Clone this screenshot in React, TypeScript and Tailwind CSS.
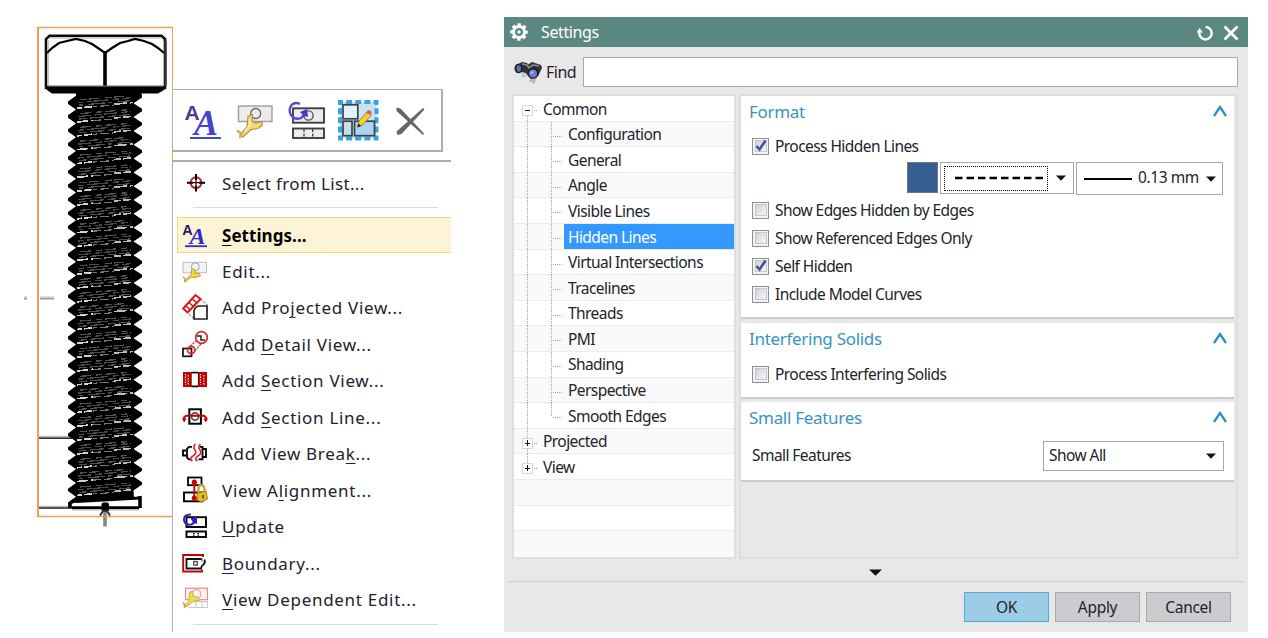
import type { ReactNode } from "react";

const PITCH = 13.83;

function Bolt() {
  const left: string[] = [];
  for (let k = 0; k < 30; k++) {
    const y = 102.7 + k * PITCH;
    left.push(`76,${(y - 7).toFixed(1)} 68,${(y - 1.2).toFixed(1)} 68,${(y + 1.2).toFixed(1)}`);
  }
  const right: string[] = [];
  for (let k = 28; k >= 0; k--) {
    const y = 96.2 + k * PITCH;
    right.push(`133.5,${(y + 7).toFixed(1)} 142,${(y + 1.2).toFixed(1)} 142,${(y - 1.2).toFixed(1)}`);
  }
  const threads = Array.from({ length: 29 }, (_, k) => 102.7 + k * PITCH);
  return (
    <svg width="172" height="638" viewBox="0 0 172 638" className="block shrink-0">
      <path d="M172 27.5H38V516.5H172" fill="none" stroke="#f4a04e" strokeWidth="1.4" />
      <path d="M38 27V517" stroke="#f4a04e" strokeWidth="2" />
      <path d="M39 437.2H72M39 507.2H72" stroke="#bbb" strokeWidth="3" />
      <path d="M39 438.3H72M39 508H72" stroke="#333" strokeWidth="1.4" />
      <path d="M40 298.5H54M24 298.5H27" stroke="#999" strokeWidth="2" />
      <path d="M40 296.7H54M24 296.7H27" stroke="#ddd" strokeWidth="1.4" />
      <path d="M46 88V39L49.500 35.800H161.500L165 39V88Z" fill="#fff" stroke="#0a0a0a" strokeWidth="2.600" />
      <path d="M48.3 40V86M50 38H162" stroke="#c4c4c4" strokeWidth="1.3" fill="none" />
      <path d="M165.500 41V86" stroke="#333" strokeWidth="2.400" />
      <path d="M47 53L52 48L59 43L67 41L76 39L85 41L92 44L98 48L105 53L112 48L120 43L128 41L135 39L144 41L152 44L158 48L164 53" fill="none" stroke="#000" strokeWidth="2.2" />
      <path d="M105 52V88" stroke="#000" strokeWidth="3.6" />
      <path d="M46 86H165L164 90L158 93.500H52L47 90Z" fill="#000" />
      <path d="M48 86.200H163" stroke="#666" strokeWidth="1.2" />
      <polygon points={`76,92 ${left.join(" ")} 75,500 75,503 134,499 ${right.join(" ")} 141,93`} fill="#000" />
      <g shapeRendering="crispEdges">
        {threads.map((y, k) => (
          <g key={k} fill="none">
            <path d={`M77 ${y + 5.500}L93 ${y + 3.800}`} stroke="#d2d2d2" strokeWidth="1.700" strokeDasharray={k % 2 ? "11 3" : "5 2 8 2"} />
            <path d={`M93 ${y + 4}L114 ${y + 2.500}`} stroke="#777" strokeWidth="1.200" strokeDasharray={k % 2 ? "8 3" : "4 3 9 3"} />
            <path d={`M114 ${y + 1.500}L133 ${y - 0.200}`} stroke="#bdbdbd" strokeWidth="1.700" strokeDasharray={k % 3 ? "7 2 8 2" : "13 3"} />
            <path d={`M79 ${y + 2.500}L130 ${y - 2}`} stroke="#505050" strokeWidth="1.300" strokeDasharray={k % 3 ? "8 3 14 4" : "4 5 17 3"} />
            <path d={`M78 ${y}L131 ${y - 5}`} stroke="#484848" strokeWidth="1.300" strokeDasharray={k % 2 ? "13 4 7 2" : "6 3 21 5"} />
            <path d={`M80 ${y - 3}L130 ${y - 7}`} stroke="#505050" strokeWidth="1.300" strokeDasharray={k % 3 ? "11 5 6 3" : "7 2 10 6"} />
          </g>
        ))}
      </g>
      <path d="M71 502L139 497V507H71Z" fill="#fff" />
      <path d="M71 502L80 499.500M140 496V508M70 503V508" stroke="#000" strokeWidth="3.600" />
      <path d="M76 501.500L140 498" stroke="#000" strokeWidth="3" />
      <path d="M72 507.600H139" stroke="#000" strokeWidth="2.600" />
      <path d="M72 509.800H139" stroke="#bbb" strokeWidth="1.500" />
      <path d="M105 510V526.500" stroke="#888" strokeWidth="3.600" />
      <rect x="101.500" y="502.500" width="7.500" height="9" rx="2" fill="#000" />
      <path d="M100 515.500L103 511H107L110 515.500" stroke="#333" strokeWidth="2" fill="none" />
      <path d="M38 516.500H172" stroke="#f4a04e" strokeWidth="1.200" />
    </svg>
  );
}

function Icon({ children }: { children: ReactNode }) {
  return (
    <svg width="26" height="26" viewBox="0 0 26 26" fill="none" className="block shrink-0 overflow-visible">
      {children}
    </svg>
  );
}

function BigIcon({ children }: { children: ReactNode }) {
  return (
    <svg width="42" height="42" viewBox="0 0 42 42" fill="none" className="block shrink-0 overflow-visible">
      {children}
    </svg>
  );
}

const icons: Record<string, ReactNode> = {
  target: (
    <>
      <circle cx="14" cy="12.700" r="5.400" stroke="#d01818" strokeWidth="1.900" />
      <path d="M14 4V10M14 15.500V21.500M5 12.700H11M17 12.700H23" stroke="#000" strokeWidth="2" />
      <path d="M14 10V15.500M11 12.700H17" stroke="#300" strokeWidth="1.200" />
    </>
  ),
  settings: (
    <>
      <text x="0.200" y="12.500" fontFamily="Liberation Sans" fontWeight="bold" fontSize="14.500" fill="#2e1a6b">A</text>
      <text x="7.500" y="21.600" fontFamily="Liberation Serif" fontWeight="bold" fontStyle="italic" fontSize="24" fill="#2b2bd0">A</text>
      <path d="M3 24.200H25" stroke="#2b2bd0" strokeWidth="1.800" />
    </>
  ),
  edit: (
    <>
      <rect x="1" y="4.300" width="23.500" height="10.500" fill="#f2f2f2" stroke="#bdbdbd" />
      <circle cx="13.300" cy="8.800" r="4" stroke="#a5a5a5" />
      <path d="M2.500 23L9 16.500L10 10.500L13 12V15.500L17 15L18.500 18L13 19.500L9 19L4 23.500Z" fill="#f2dc3c" stroke="#c59a3a" strokeWidth="1" />
      <path d="M1 19L3 21V24.500" stroke="#c9a04c" strokeWidth="1.600" />
    </>
  ),
  projected: (
    <>
      <path d="M1.200 14.500L13.500 1L18.500 5L5.500 18.500Z" stroke="#cf1a1a" strokeWidth="2" />
      <path d="M7 8.500L11.500 12.500M10.500 5L14.500 8.500M3.800 12L8 15.500" stroke="#cf1a1a" strokeWidth="1.500" />
      <path d="M19 5.500L25.500 11M5 18L12 25" stroke="#dd6666" strokeWidth="1.300" strokeDasharray="2 1.500" />
      <path d="M12 25V17C12.500 13.500 14.500 12 18 12H25V25Z" stroke="#222" strokeWidth="1.700" fill="#fff" />
    </>
  ),
  detail: (
    <>
      <rect x="1" y="17.500" width="8.500" height="7.800" stroke="#111" strokeWidth="1.700" fill="#fff" />
      <circle cx="19.500" cy="6.500" r="5.800" stroke="#d42a2a" strokeWidth="1.700" />
      <circle cx="9.200" cy="19" r="3.600" stroke="#d42a2a" strokeWidth="1.700" />
      <path d="M8 15.500L14.500 9.500M12.500 20L19.500 12.500" stroke="#d42a2a" strokeWidth="1.200" strokeDasharray="2.500 1" />
      <path d="M15 5H19V9H23" stroke="#222" strokeWidth="1.500" />
    </>
  ),
  section: (
    <>
      <path d="M1 5H25V20H1Z" fill="#c90000" />
      <path d="M9.500 6.300H16V18.700H9.500Z" fill="#fff" />
      <path d="M9.500 5.500H16M9.500 19.500H16" stroke="#000" strokeWidth="1.300" />
      <path d="M3.500 7V18M18.500 7V18" stroke="#fff" strokeWidth="1.200" strokeDasharray="1.300 1.300" />
      <path d="M6.200 8.300V18M21.800 8.300V18" stroke="#fff" strokeWidth="1.200" strokeDasharray="1.300 1.300" />
      <path d="M9 6V19M16.400 6V19" stroke="#5a0000" strokeWidth="0.800" />
    </>
  ),
  sectionLine: (
    <>
      <rect x="7.300" y="5.300" width="11.600" height="14.400" stroke="#000" strokeWidth="2" />
      <circle cx="13" cy="12.500" r="3.600" stroke="#555" strokeWidth="1.700" />
      <path d="M2 17V13.500L4 11.700H22L24 13.500V17" stroke="#c90000" strokeWidth="1.900" />
      <path d="M0 14.500H4.500L2.200 18.500ZM21.500 14.500H26L23.800 18.500Z" fill="#c90000" />
    </>
  ),
  viewBreak: (
    <>
      <path d="M4 10.500H1V15.500H4M10 6.800H7L5 8.800V17.500L7 19.300H9.500M18 6.800H20.500V19.300H16.500M21 9H24V17H21" stroke="#000" strokeWidth="1.800" />
      <path d="M13.500 4Q10.500 7 13 10T11 16T10.500 21M18.500 4Q15.500 7 18 10T16 16T15.500 21" stroke="#dc2626" strokeWidth="1.600" />
    </>
  ),
  alignment: (
    <>
      <rect x="6" y="0.500" width="13.500" height="7.700" stroke="#000" strokeWidth="1.800" />
      <rect x="2" y="15.500" width="18.500" height="8.800" stroke="#000" strokeWidth="1.900" />
      <path d="M12.300 6V21" stroke="#d40000" strokeWidth="1.900" />
      <circle cx="12.300" cy="5.200" r="2.600" fill="#d40000" />
      <circle cx="12.300" cy="21" r="2.600" fill="#d40000" />
      <path d="M16.500 16V11.500Q16.500 8 19 8Q22 8 22.500 12V15" stroke="#bfa820" strokeWidth="2.200" />
      <path d="M15 16.500L24 14L25.500 22L19 25L15.500 23Z" fill="#e8bd20" stroke="#9a7b12" strokeWidth="0.900" />
      <path d="M21 18V21.500" stroke="#6b4d00" strokeWidth="1.800" />
    </>
  ),
  update: (
    <>
      <rect x="4.500" y="4.200" width="19.500" height="9.800" stroke="#000" strokeWidth="1.900" />
      <rect x="4.500" y="18.500" width="19.500" height="5.500" stroke="#000" strokeWidth="1.900" />
      <path d="M11 20.500H12.500M15.500 20.500H17M11 22.200H12.500M15.500 22.200H17" stroke="#111" strokeWidth="1.200" />
      <path d="M9 1.500Q1.500 1.500 2 7Q3 12.500 9 11.500Q13 10.500 12.500 6.500" stroke="#2d20c8" strokeWidth="2" />
      <path d="M8.500 5.500L15 3.500V11L11 9.500Z" fill="#2d20c8" />
    </>
  ),
  boundary: (
    <>
      <path d="M21 7V5H1.200V21.500H20V19.500" stroke="#c90000" strokeWidth="1.900" />
      <path d="M20 9H4.500V18.500H19Q19.500 15.500 21.500 14.500Q23.500 13 22.500 9.500" stroke="#111" strokeWidth="1.800" />
      <path d="M20 8V12" stroke="#777" strokeWidth="1.200" />
      <rect x="11.700" y="11.500" width="3.600" height="3.600" stroke="#555" strokeWidth="1.400" />
    </>
  ),
  dependent: (
    <>
      <rect x="3.500" y="2.200" width="22" height="11.500" fill="#fff5f5" stroke="#ef8a8a" strokeWidth="1.200" />
      <circle cx="14.500" cy="8" r="4.300" stroke="#f0a5a5" strokeWidth="1.300" />
      <path d="M7 15.500H25.500V21.500H7M14 15.500V21.500M20 15.500V21.500" stroke="#c9c9c9" strokeWidth="1.100" />
      <path d="M2.500 20L7 14.500L7.500 6L11 5.500V10L15.500 11L18 14L11 15.500L5 20.500Z" fill="#efdb52" stroke="#d1a34b" strokeWidth="0.900" />
      <path d="M1 16.500L2.500 18.500V22" stroke="#c99e4f" strokeWidth="1.600" />
    </>
  ),
};

function MenuRow({ icon, children }: { icon: string; children: ReactNode }) {
  return (
    <div className="flex h-[36.5px] shrink-0 items-center pl-[9px]">
      <Icon>{icons[icon]}</Icon>
      <span className="ml-[14px] pt-px whitespace-nowrap">{children}</span>
    </div>
  );
}

function U({ children }: { children: ReactNode }) {
  return <span className="underline decoration-1 underline-offset-[3px]">{children}</span>;
}

function ContextMenu() {
  return (
    <div className="flex h-[632px] w-[279px] shrink-0 flex-col">
      <div className="mt-[27px] h-[62px] w-px shrink-0 bg-[#f4a04e]" />
      <div className="flex h-[63px] w-[271px] shrink-0 items-center justify-between border-t border-r-2 border-b-2 border-l border-[#aeaeae] bg-white pr-[10px] pl-[9px]">
        <BigIcon>
          <text x="2.500" y="20.500" fontFamily="Liberation Sans" fontWeight="bold" fontSize="21" fill="#4c3d86">A</text>
          <text x="12" y="35.500" fontFamily="Liberation Serif" fontWeight="bold" fontStyle="italic" fontSize="36" fill="#4444cc">A</text>
          <path d="M8 39H39" stroke="#4444cc" strokeWidth="2" />
        </BigIcon>
        <BigIcon>
          <rect x="4.500" y="7" width="33.500" height="15.500" fill="#ececec" stroke="#9d9d9d" strokeWidth="1.400" />
          <circle cx="21.700" cy="14.500" r="5" stroke="#666" strokeWidth="1.300" />
          <path d="M6 36L13 28L14 17.500L18.500 15.500L18 22L22 24L27.500 22.500L28.500 26L24 29.500L17 30.500L9 38Z" fill="#f6d878" stroke="#bd8d46" strokeWidth="1.200" />
          <path d="M3 31.500L7 34.500L6 39" stroke="#d6a85e" strokeWidth="2.400" />
          <path d="M15.500 20L16 26L11 32" stroke="#fff3c4" strokeWidth="1.400" />
        </BigIcon>
        <BigIcon>
          <rect x="7" y="9.300" width="31" height="14.400" fill="#ececec" stroke="#404040" strokeWidth="1.900" />
          <rect x="7" y="29.500" width="31" height="9.500" fill="#ececec" stroke="#404040" strokeWidth="1.900" />
          <path d="M18 30V39M26.700 30V39" stroke="#404040" strokeWidth="1.300" strokeDasharray="3 1.500" />
          <circle cx="22.500" cy="16.500" r="4.600" stroke="#555" strokeWidth="1.400" />
          <path d="M14 5Q9 2.500 5.500 6Q2 11 5 16Q9 21.500 15 19Q18 17 18.500 13" stroke="#5349d6" strokeWidth="2.300" />
          <path d="M14 13L21 10L22 18L18 17Z" fill="#4438cc" />
        </BigIcon>
        <BigIcon>
          <rect x="3" y="3" width="36.500" height="36.500" fill="#c9e2f1" stroke="#3ca2dc" strokeWidth="4" strokeDasharray="6 3.125" strokeDashoffset="3" />
          <rect x="6" y="5.800" width="14.800" height="14" fill="#e3f1f9" stroke="#3b4246" strokeWidth="1.700" />
          <rect x="6" y="22.200" width="9" height="14.500" fill="#c5def0" stroke="#3b4246" strokeWidth="1.700" />
          <rect x="17.500" y="22.200" width="20" height="14.500" fill="#acd4ee" stroke="#3b4246" strokeWidth="1.700" />
          <path d="M20.500 28L22 22L30 13L34 16.500L26 25.500Z" fill="#f6cf37" stroke="#a77a22" strokeWidth="0.900" />
          <path d="M20.200 28.500L21.500 24.500L24 27Z" fill="#222" />
          <path d="M29 14L31 11L34.500 12.500L34.500 16Z" fill="#dd5c4c" />
        </BigIcon>
        <BigIcon>
          <path d="M7.500 8.500L11.500 9.500L35 34.500L34 36L7.500 12Z" fill="#666" />
          <path d="M34 9L35.500 10.500L12.500 35L8.500 36L7.500 32.500Z" fill="#666" />
        </BigIcon>
      </div>
      <div className="h-[8px] w-px shrink-0 bg-[#f4a04e]" />
      <div className="flex min-h-0 grow flex-col">
        <div className="h-[2px] shrink-0 bg-[#aeaeae]" />
        <div className="flex grow flex-col border-l border-[#aeaeae] bg-white font-['Noto_Sans','Open_Sans',sans-serif] text-[17px] tracking-[0.7px] text-[#25202c]">
          <div className="h-[3px] shrink-0" />
          <MenuRow icon="target"><span className="tracking-[0.35px]">Se<U>l</U>ect from List...</span></MenuRow>
          <div className="mt-[5px] ml-[20px] h-px w-[245px] shrink-0 bg-[#dadada]" />
          <div className="mt-[9px] ml-[4px] flex h-[36px] shrink-0 items-center border-y border-l border-[#f7d57c] bg-[#fdf4d8] pl-[4px] text-black">
            <Icon>{icons.settings}</Icon>
            <span className="ml-[14px] pt-px font-bold tracking-[0.05px]"><U>S</U>ettings...</span>
          </div>
          <MenuRow icon="edit">Edit...</MenuRow>
          <MenuRow icon="projected">Add Pro<U>j</U>ected View...</MenuRow>
          <MenuRow icon="detail">Add <U>D</U>etail View...</MenuRow>
          <MenuRow icon="section">Add <U>S</U>ection View...</MenuRow>
          <MenuRow icon="sectionLine">Add <U>S</U>ection Line...</MenuRow>
          <MenuRow icon="viewBreak">Add View Brea<U>k</U>...</MenuRow>
          <MenuRow icon="alignment">View A<U>l</U>ignment...</MenuRow>
          <MenuRow icon="update"><U>U</U>pdate</MenuRow>
          <MenuRow icon="boundary"><U>B</U>oundary...</MenuRow>
          <MenuRow icon="dependent"><U>V</U>iew Dependent Edit...</MenuRow>
          <div className="mt-[6px] ml-[20px] h-px w-[245px] shrink-0 bg-[#dadada]" />
        </div>
      </div>
    </div>
  );
}

type Node = { label: string; level: 0 | 1; open?: boolean; last?: boolean };
const nodes: Node[] = [
  { label: "Common", level: 0, open: true },
  { label: "Configuration", level: 1 },
  { label: "General", level: 1 },
  { label: "Angle", level: 1 },
  { label: "Visible Lines", level: 1 },
  { label: "Hidden Lines", level: 1 },
  { label: "Virtual Intersections", level: 1 },
  { label: "Tracelines", level: 1 },
  { label: "Threads", level: 1 },
  { label: "PMI", level: 1 },
  { label: "Shading", level: 1 },
  { label: "Perspective", level: 1 },
  { label: "Smooth Edges", level: 1, last: true },
  { label: "Projected", level: 0 },
  { label: "View", level: 0, last: true },
  { label: "", level: 0 },
  { label: "", level: 0 },
  { label: "", level: 0 },
];

function Guide({ node }: { node: Node }) {
  const dots = { stroke: "#a4a4a4", strokeWidth: 1, strokeDasharray: "1 1" };
  return (
    <svg width={node.level ? 50 : 28} height="25.600" viewBox={`0 0 ${node.level ? 50 : 28} 25.600`} fill="none" shapeRendering="crispEdges" className="block shrink-0">
      {node.level === 1 ? (
        <>
          <path d="M13.500 0V26" {...dots} />
          <path d={node.last ? "M37.500 0V14" : "M37.500 0V26"} {...dots} />
          <path d="M39 14.500H48" {...dots} />
        </>
      ) : (
        <>
          {!node.open && <path d="M13.500 0V9" {...dots} />}
          {!node.last && <path d="M13.500 20V26" {...dots} />}
          <rect x="8.500" y="9.500" width="10" height="10" fill="#fff" stroke="#d8d8d8" />
          <path d="M10.500 14.500H16.500" stroke="#111" strokeWidth="1.400" />
          {!node.open && <path d="M13.500 11.500V17.500" stroke="#111" strokeWidth="1.400" />}
          <path d="M20 14.500H24" {...dots} />
        </>
      )}
    </svg>
  );
}

function Tree() {
  return (
    <div className="h-[465px] w-[224px] shrink-0 border-2 border-[#dedede] bg-white">
      {nodes.map((n, i) => (
        <div
          key={i}
          className={
            i === nodes.length - 1
              ? "flex h-[25.6px] items-stretch bg-[#fafafa]"
              : i % 2
                ? "flex h-[25.6px] items-stretch border-b border-[#ececec] bg-[#fafafa]"
                : "flex h-[25.6px] items-stretch border-b border-[#ececec] bg-white"
          }
        >
          {n.label && <Guide node={n} />}
          <div
            className={
              n.label === "Hidden Lines"
                ? "flex grow items-center bg-[#3399ff] pt-[2px] pl-[4px] text-white"
                : n.level === 1
                  ? "flex grow items-center pt-[2px] pl-[4px]"
                  : "flex grow items-center pt-[2px] pl-[1px]"
            }
          >
            <span className="whitespace-nowrap">{n.label}</span>
          </div>
        </div>
      ))}
    </div>
  );
}

function Check({ on, children }: { on?: boolean; children: ReactNode }) {
  return (
    <div className="flex h-[28.1px] shrink-0 items-center pl-[11px]">
      <span className="flex h-[17px] w-[17px] items-center justify-center border border-[#8e8f8f] bg-[#f4f4f4]">
        <span className="flex h-[12px] w-[12px] items-center justify-center border border-[#c3c7cc] bg-gradient-to-br from-[#ced3d9] to-[#f6f6f6]">
          {on && (
            <svg width="12" height="14" viewBox="0 0 12 14" fill="none" className="-mt-px shrink-0">
              <path d="M1.500 7L4.500 10.500L10.500 1.500" stroke="#42529c" strokeWidth="2.500" />
            </svg>
          )}
        </span>
      </span>
      <span className="ml-[6px] pt-px whitespace-nowrap">{children}</span>
    </div>
  );
}

function SectionTitle({ children }: { children: ReactNode }) {
  return (
    <div className="flex h-[31px] shrink-0 items-center justify-between pr-[7px] pb-px pl-[8px] text-[17px] tracking-[-0.3px] text-[#3793c8]">
      <span>{children}</span>
      <svg width="14" height="12" viewBox="0 0 14 12" fill="none">
        <path d="M1 11L7 2L13 11" stroke="#2e8fc6" strokeWidth="2.300" />
      </svg>
    </div>
  );
}

function Caret() {
  return (
    <svg width="10" height="6" viewBox="0 0 10 6" className="shrink-0">
      <path d="M0 0.500H10L5 5.800Z" fill="#111" />
    </svg>
  );
}

function Dialog() {
  return (
    <div className="mt-[17px] ml-[53px] flex h-[615px] w-[744px] shrink-0 flex-col bg-[#e8e8e8] font-['Noto_Sans','Open_Sans',sans-serif] text-[15.5px] tracking-[-0.56px] text-[#25222b]">
      <div className="flex h-[30px] shrink-0 items-center bg-[#5b8881] pr-[9px] pl-[5px] text-[16px] tracking-[-0.4px] text-white">
        <svg width="20" height="20" viewBox="0 0 20 20" fill="none">
          <circle cx="10" cy="10" r="7.300" stroke="#fff" strokeWidth="3" strokeDasharray="3.233 2.500" strokeDashoffset="1.600" />
          <circle cx="10" cy="10" r="5.500" stroke="#fff" strokeWidth="3" />
          <circle cx="10" cy="10" r="1.700" fill="#fff" />
        </svg>
        <span className="ml-[12px] grow">Settings</span>
        <svg width="18" height="18" viewBox="0 0 18 18" fill="none" className="mt-[2px]">
          <path d="M3.300 7V9A6.200 6.200 0 1 0 9.500 3" stroke="#fff" strokeWidth="2.500" />
          <path d="M0.500 8.500L3.500 4L7 8.500Z" fill="#fff" />
        </svg>
        <svg width="16" height="16" viewBox="0 0 16 16" fill="none" className="mt-[2px] ml-[9px]">
          <path d="M1.500 1.500L14.500 14.500M14.500 1.500L1.500 14.500" stroke="#fff" strokeWidth="2.800" />
        </svg>
      </div>
      <div className="mt-[10px] flex h-[30px] shrink-0 items-center pl-[10px]">
        <svg width="28" height="24" viewBox="0 0 28 24" fill="none" className="mt-[2px]">
          <path d="M17 17L24 11L22 19L20 23L15 20Z" fill="#b9b9b9" />
          <path d="M7 12L12 9L15 15L8 17Z" fill="#c8c8c8" />
          <path d="M2 4L8 1L13 2L14 3.500L18 1L21 2L27 4L28 7L24 15L17 18L12 12L8 11L4 12Z" fill="#333" />
          <path d="M8 3L13 4L15 7L19 4L25 5" stroke="#8b8b8b" strokeWidth="1.600" />
          <ellipse cx="4.500" cy="7.500" rx="4" ry="4.800" fill="#222" />
          <ellipse cx="4.800" cy="7.500" rx="2.300" ry="3.200" fill="#5a70c8" />
          <circle cx="19" cy="12" r="5.800" fill="#1c1c28" />
          <circle cx="19" cy="12.500" r="4" fill="#6b7bd8" />
          <circle cx="18" cy="11.500" r="1.500" fill="#a4b2f4" />
        </svg>
        <span className="ml-[4px] w-[37px] text-[16px] tracking-[-0.5px] whitespace-nowrap">Find</span>
        <div className="h-[30px] w-[655px] border border-[#a9a9a9] bg-white" />
      </div>
      <div className="mt-[7px] flex shrink-0 gap-[3px] pl-[8px]">
        <Tree />
        <div className="flex h-[465px] w-[499px] shrink-0 flex-col border-2 border-[#dedede] pr-[2px]">
          <section className="flex h-[223px] shrink-0 flex-col border-b-2 border-[#cbcbcb] bg-white">
            <SectionTitle>Format</SectionTitle>
            <div className="h-[5px] shrink-0" />
            <Check on>Process Hidden Lines</Check>
            <div className="mt-[2px] flex h-[33px] shrink-0 items-start pl-[166px]">
              <div className="h-[31px] w-[31px] border border-[#777] bg-[#365f91]" />
              <div className="ml-[2px] flex h-[32px] w-[134px] items-center border border-[#a9a9a9] pr-[7px] pl-[3px]">
                <div className="flex h-[25px] w-[104px] items-center border border-dotted border-black">
                  <svg width="102" height="4" viewBox="0 0 102 4">
                    <path d="M10 2H99" stroke="#000" strokeWidth="2.500" strokeDasharray="7.500 4" />
                  </svg>
                </div>
                <div className="ml-auto"><Caret /></div>
              </div>
              <div className="ml-[2px] flex h-[33px] w-[147px] items-center border border-[#a9a9a9] pr-[6px] pl-[7px]">
                <div className="mt-px h-[1.5px] w-[48px] bg-black" />
                <span className="ml-[6px] grow pb-[2px] tracking-[-0.4px] whitespace-nowrap">0.13 mm</span>
                <Caret />
              </div>
            </div>
            <div className="h-px shrink-0" />
            <Check>Show Edges Hidden by Edges</Check>
            <Check>Show Referenced Edges Only</Check>
            <Check on>Self Hidden</Check>
            <Check>Include Model Curves</Check>
          </section>
          <section className="mt-[4px] flex h-[76px] shrink-0 flex-col border-b-2 border-[#cbcbcb] bg-white">
            <SectionTitle>Interfering Solids</SectionTitle>
            <div className="h-[6px] shrink-0" />
            <Check>Process Interfering Solids</Check>
          </section>
          <section className="mt-[3px] flex h-[80px] shrink-0 flex-col border-b-2 border-[#cbcbcb] bg-white">
            <SectionTitle>Small Features</SectionTitle>
            <div className="mt-[8px] flex h-[30px] items-center justify-between pr-[10px] pl-[11px]">
              <span>Small Features</span>
              <div className="flex h-[30px] w-[181px] items-center justify-between border border-[#a9a9a9] pr-[7px] pl-[5px]">
                <span>Show All</span>
                <Caret />
              </div>
            </div>
          </section>
        </div>
      </div>
      <div className="flex h-[22px] shrink-0 items-center justify-center pt-[5px] pr-[2px]">
        <svg width="13" height="7" viewBox="0 0 13 7">
          <path d="M0 0.500H13L6.500 6.800Z" fill="#111" />
        </svg>
      </div>
      <div className="mr-[4px] ml-[3px] h-px shrink-0 bg-[#d0d0d0]" />
      <div className="mt-[10px] flex shrink-0 justify-end gap-[6px] pr-[17px] tracking-[-0.3px]">
        <div className="flex h-[30px] w-[85px] items-center justify-center border-[1.5px] border-[#58a9d6] bg-[#9bcde6] pt-px">OK</div>
        <div className="flex h-[30px] w-[85px] items-center justify-center border border-[#a9a9a9] bg-[#cbccd0] pt-px">Apply</div>
        <div className="flex h-[30px] w-[85px] items-center justify-center border border-[#a9a9a9] bg-[#cbccd0] pt-px">Cancel</div>
      </div>
    </div>
  );
}

export default function App() {
  return (
    <div className="flex h-[638px] w-[1268px] items-start overflow-hidden bg-white leading-none">
      <Bolt />
      <ContextMenu />
      <Dialog />
    </div>
  );
}
